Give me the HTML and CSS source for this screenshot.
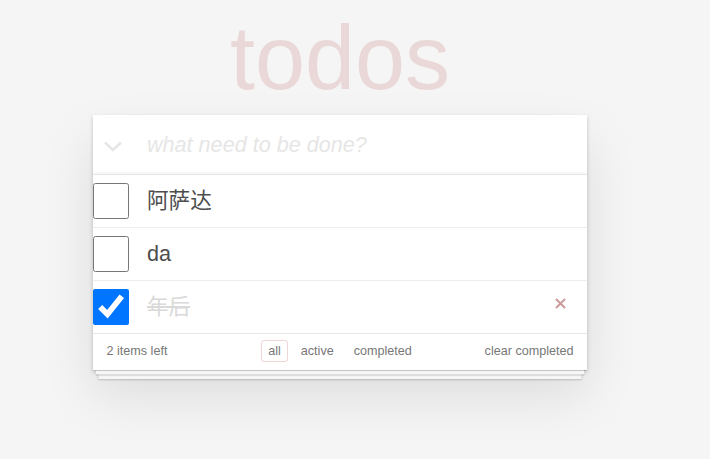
FILE: index.html
```html
<!DOCTYPE html>
<html lang="zh">
<head>
<meta charset="utf-8">
<title>todos</title>
<link rel="stylesheet" href="styles.css">
</head>
<body>
<section class="todoapp">
  <h1 class="title">todos</h1>
  <div class="panel">
    <header class="new-row">
      <svg class="toggle-all" width="54" height="59" viewBox="0 0 54 59" aria-hidden="true">
        <polyline points="12,27.5 20,35 28,27.5" fill="none" stroke="#e6e6e6" stroke-width="2.6"/>
      </svg>
      <input class="new-todo" type="text" placeholder="what need to be done?">
    </header>
    <ul class="todo-list">
      <li class="todo">
        <input class="toggle" type="checkbox">
        <label class="todo-label">阿萨达</label>
      </li>
      <li class="todo">
        <input class="toggle" type="checkbox">
        <label class="todo-label">da</label>
      </li>
      <li class="todo completed">
        <input class="toggle" type="checkbox" checked>
        <label class="todo-label">年后</label>
        <button class="destroy" type="button" aria-label="delete">
          <svg width="11" height="11" viewBox="0 0 11 11">
            <path d="M1 1 L10 10 M10 1 L1 10" stroke="#cc9a9a" stroke-width="2" fill="none"/>
          </svg>
        </button>
      </li>
    </ul>
    <footer class="footer">
      <span class="count">2 items left</span>
      <ul class="filters">
        <li><a class="filter selected" href="#/">all</a></li>
        <li><a class="filter" href="#/active">active</a></li>
        <li><a class="filter" href="#/completed">completed</a></li>
      </ul>
      <button class="clear" type="button">clear completed</button>
    </footer>
  </div>
</section>
</body>
</html>
```

FILE: styles.css
```css
html, body {
  margin: 0;
  padding: 0;
}

html {
  background: #f5f5f5;
}

body {
  min-height: 100vh;
  background: #f5f5f5;
  color: #4d4d4d;
  font-family: "Liberation Sans", Arial, "Noto Sans CJK SC", sans-serif;
}

.todoapp {
  width: 494px;
  margin-left: 93px;
  padding-bottom: 80px;
}

.title {
  margin: 0;
  padding-top: 13px;
  height: 90px;
  margin-bottom: 12px;
  font-size: 90px;
  line-height: 90px;
  font-weight: 400;
  text-align: center;
  color: rgba(175, 47, 47, 0.15);
}

.panel {
  position: relative;
  background: #fff;
  box-shadow: 0 2px 4px rgba(0, 0, 0, 0.2), 0 25px 50px rgba(0, 0, 0, 0.1);
}

.new-row {
  display: flex;
  align-items: center;
  height: 59px;
  box-shadow: inset 0 -2px 1px rgba(0, 0, 0, 0.03);
}

.toggle-all {
  display: block;
  flex: none;
}

.new-todo {
  flex: 1;
  min-width: 0;
  border: 0;
  outline: none;
  background: transparent;
  padding: 0 13.5px 0 0;
  font-family: "Liberation Sans", Arial, "Noto Sans CJK SC", sans-serif;
  font-size: 21.6px;
  font-style: italic;
  color: #4d4d4d;
}

.new-todo::placeholder {
  font-style: italic;
  color: #e6e6e6;
}

.todo-list {
  list-style: none;
  margin: 0;
  padding: 0;
  border-top: 1px solid #e6e6e6;
}

.todo {
  display: flex;
  align-items: center;
  height: 52px;
  border-bottom: 1px solid #ededed;
  font-size: 21.6px;
}

.todo:last-child {
  border-bottom: none;
}

.toggle {
  flex: none;
  width: 36px;
  height: 36px;
  margin: 0;
}

.todo-label {
  flex: 1;
  padding-left: 18px;
  line-height: 1.2;
  color: #4d4d4d;
}

.completed .todo-label {
  color: #d9d9d9;
  text-decoration: line-through;
}

.destroy {
  flex: none;
  display: block;
  width: 11px;
  height: 11px;
  margin: 0 21px 7px 0;
  padding: 0;
  border: 0;
  background: none;
}

.destroy svg {
  display: block;
}

.footer {
  position: relative;
  display: grid;
  grid-template-columns: 1fr auto 1fr;
  align-items: center;
  height: 18px;
  padding: 8px 13.5px 10px;
  border-top: 1px solid #e6e6e6;
  font-size: 12.6px;
  line-height: 18px;
  color: #777;
}

.footer::before {
  content: "";
  position: absolute;
  left: 0;
  right: 0;
  bottom: 0;
  height: 45px;
  overflow: hidden;
  box-shadow: 0 0.9px 0.9px rgba(0, 0, 0, 0.2),
    0 7.2px 0 -2.7px #f6f6f6,
    0 8.1px 0.9px -2.7px rgba(0, 0, 0, 0.2),
    0 14.4px 0 -5.4px #f6f6f6,
    0 15.3px 1.8px -5.4px rgba(0, 0, 0, 0.2);
}

.count {
  justify-self: start;
}

.filters {
  display: flex;
  list-style: none;
  margin: 0;
  padding: 0;
}

.filter {
  margin: 0 2.7px;
  padding: 2.7px 6.3px;
  border: 1px solid transparent;
  border-radius: 3px;
  color: inherit;
  text-decoration: none;
}

.filter.selected {
  border-color: rgba(175, 47, 47, 0.2);
}

.clear {
  justify-self: end;
  padding: 0;
  border: 0;
  background: none;
  font: inherit;
  line-height: inherit;
  color: inherit;
}
```
